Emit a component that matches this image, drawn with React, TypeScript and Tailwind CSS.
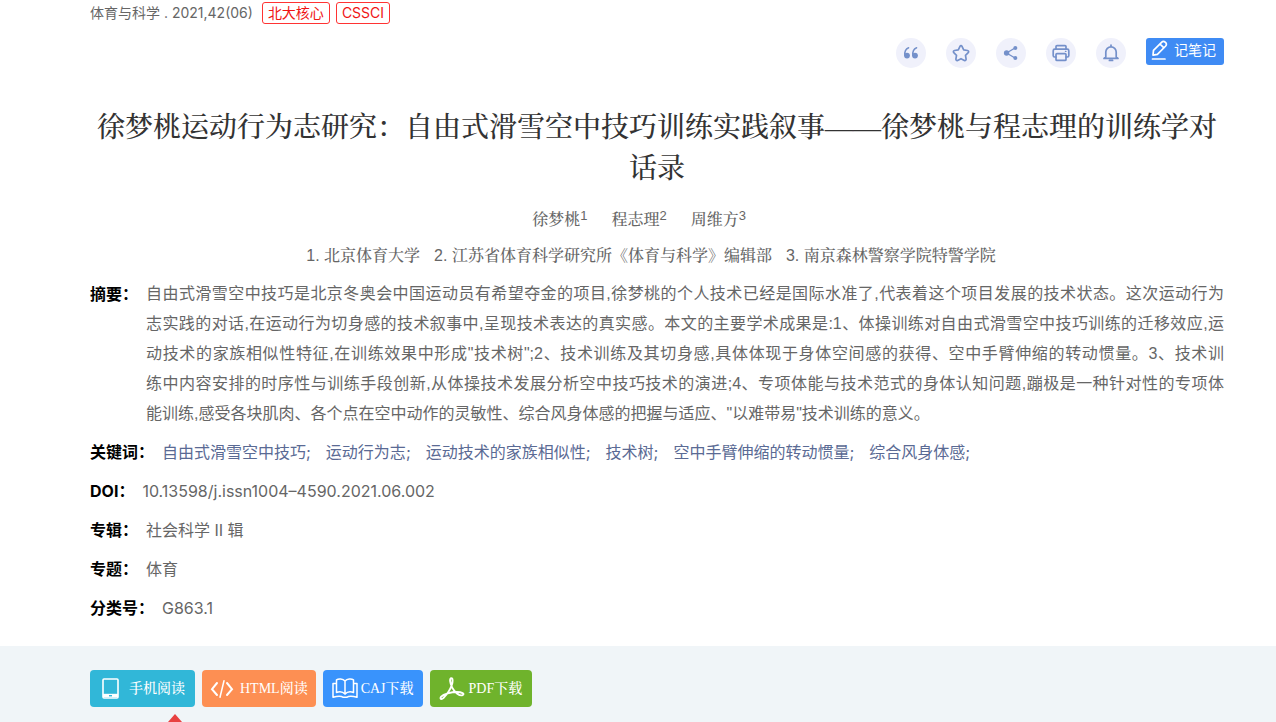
import type { ReactNode } from "react";

const abstractLines = [
  "自由式滑雪空中技巧是北京冬奥会中国运动员有希望夺金的项目,徐梦桃的个人技术已经是国际水准了,代表着这个项目发展的技术状态。这次运动行为",
  "志实践的对话,在运动行为切身感的技术叙事中,呈现技术表达的真实感。本文的主要学术成果是:1、体操训练对自由式滑雪空中技巧训练的迁移效应,运",
  "动技术的家族相似性特征,在训练效果中形成\"技术树\";2、技术训练及其切身感,具体体现于身体空间感的获得、空中手臂伸缩的转动惯量。3、技术训",
  "练中内容安排的时序性与训练手段创新,从体操技术发展分析空中技巧技术的演进;4、专项体能与技术范式的身体认知问题,蹦极是一种针对性的专项体",
  "能训练,感受各块肌肉、各个点在空中动作的灵敏性、综合风身体感的把握与适应、\"以难带易\"技术训练的意义。",
];

const keywords = [
  "自由式滑雪空中技巧",
  "运动行为志",
  "运动技术的家族相似性",
  "技术树",
  "空中手臂伸缩的转动惯量",
  "综合风身体感",
];

const authors = ["徐梦桃", "程志理", "周维方"];

const Badge = ({ children }: { children: ReactNode }) => (
  <a
    href="#"
    className="border border-[#f33] rounded-[3px] px-[5px] h-[22px] leading-5 text-sm text-[#f01414]"
  >
    {children}
  </a>
);

const RoundButton = ({ label, children }: { label: string; children: ReactNode }) => (
  <button
    aria-label={label}
    className="size-[30px] rounded-full bg-[#f0f1fb] text-[#7490ca] flex items-center justify-center"
  >
    <svg
      viewBox="0 0 18 18"
      className="size-[18px]"
      fill="none"
      stroke="currentColor"
      strokeWidth="1.7"
      strokeLinecap="round"
      strokeLinejoin="round"
    >
      {children}
    </svg>
  </button>
);

const Row = ({ label, children }: { label: string; children: ReactNode }) => (
  <div className="flex gap-2 leading-6">
    <dt className="font-bold text-black shrink-0">{label}</dt>
    <dd>{children}</dd>
  </div>
);

const App = () => {
  return (
    <div className="min-h-screen flex flex-col bg-white text-[#666] text-base font-['Inter','Noto_Sans_CJK_SC',sans-serif]">
      <main className="pl-[90px] pr-[52px] pb-[26px]">
        <div className="flex items-center gap-1.5 pt-[2px] text-sm leading-[22px]">
          <span className="mr-[3px]">
            <a href="#">体育与科学</a> . <a href="#">2021,42(06)</a>
          </span>
          <Badge>北大核心</Badge>
          <Badge>CSSCI</Badge>
        </div>

        {/* Toolbar */}
        <div className="flex justify-end gap-5 mt-[14px]">
          <RoundButton label="引用">
            <g fill="currentColor" stroke="none">
              <circle cx="5" cy="11.6" r="2.9" />
              <circle cx="13" cy="11.6" r="2.9" />
            </g>
            <path d="M2.9 11.4C2.4 7.600 3.800 5 6.600 3.800M10.900 11.400C10.400 7.600 11.800 5 14.600 3.800" strokeWidth="1.5" />
          </RoundButton>
          <RoundButton label="收藏">
            <path d="M9 1.700c.5 0 .8.300 1 .7l1.700 3.500 3.800.6c1.100.2 1.500 1.300.7 2.100l-2.700 2.700.6 3.900c.1 1-.8 1.600-1.700 1.200L9 14.700l-3.400 1.700c-.9.4-1.800-.2-1.700-1.200l.6-3.900L1.800 8.600c-.8-.8-.4-1.900.7-2.100l3.800-.6L8 2.400c.2-.4.5-.7 1-.7z" />
          </RoundButton>
          <RoundButton label="分享">
            <path d="M13 4L4.5 9l8.5 5" strokeWidth="1.4" />
            <g fill="currentColor" stroke="none">
              <circle cx="13.3" cy="3.9" r="2" />
              <circle cx="4.6" cy="9" r="2.7" />
              <circle cx="13.3" cy="14.1" r="2" />
            </g>
          </RoundButton>
          <RoundButton label="打印">
            <path d="M4 5V2.6C4 2 4.4 1.6 5 1.6h8c.6 0 1 .4 1 1V5M4 13H2.6c-.9 0-1.4-.5-1.4-1.4V6.8c0-1 .6-1.6 1.6-1.6h12.4c1 0 1.6.6 1.6 1.6v4.8c0 .9-.5 1.4-1.4 1.4H14" />
            <rect x="4" y="9.6" width="10" height="6.8" rx="1" />
            <path d="M13.400 7.400h.6" strokeWidth="1.2" />
          </RoundButton>
          <RoundButton label="提醒">
            <path d="M9 1v1.2M3.8 13V8a5.2 5.2 0 0110.4 0v5l1.8 1.4H2zM7.4 16.4h3.2" />
          </RoundButton>
          <button className="h-[27px] pl-1 pr-2 pb-[3px] rounded-[3px] bg-[#3f8bf4] text-white text-sm flex items-center gap-1">
            <svg
              viewBox="0 0 20 22"
              className="w-5 h-[22px]"
              fill="none"
              stroke="currentColor"
              strokeWidth="1.7"
              strokeLinejoin="round"
              strokeLinecap="round"
            >
              <path d="M3 16.2l.5-4.8 8.3-8.3a2.3 2.3 0 013.3 0l.6.6a2.3 2.3 0 010 3.3l-8.3 8.3zM10 5l3.9 3.9" />
              <path d="M2.5 20h12.5" />
            </svg>
            记笔记
          </button>
        </div>

        <h1 className="mt-[39px] text-[28px] leading-[41px] text-center text-[#333] font-medium font-['Liberation_Serif','Noto_Serif_CJK_SC','Noto_Sans_CJK_SC',serif]">
          徐梦桃运动行为志研究：自由式滑雪空中技巧训练实践叙事——徐梦桃与程志理的训练学对话录
        </h1>

        <div className="mt-[19px] pr-9 flex justify-center gap-6 leading-6 font-['Liberation_Sans','Noto_Serif_CJK_SC',serif] font-medium">
          {authors.map((name, i) => (
            <a href="#" key={name} className="flex">
              {name}
              <sup className="text-[13px] leading-4 top-0">{i + 1}</sup>
            </a>
          ))}
        </div>
        <div className="mt-3 pr-3 flex justify-center gap-[14px] leading-6 font-['Liberation_Sans','Noto_Serif_CJK_SC',serif] font-medium">
          <a href="#">1. 北京体育大学</a>
          <a href="#">2. 江苏省体育科学研究所《体育与科学》编辑部</a>
          <a href="#">3. 南京森林警察学院特警学院</a>
        </div>

        <dl className="mt-[11px] flex flex-col gap-[15px]">
          <div className="flex gap-2 leading-[30px] -mb-1">
            <dt className="font-bold text-black w-12 shrink-0">摘要：</dt>
            <dd className="grow min-w-0 font-['Liberation_Sans','Noto_Sans_CJK_SC',sans-serif]">
              {abstractLines.map((line, i) => (
                <span
                  key={i}
                  className={
                    i < abstractLines.length - 1
                      ? "block text-justify [text-align-last:justify]"
                      : "block"
                  }
                >
                  {line}
                </span>
              ))}
            </dd>
          </div>
          <div className="flex gap-2 leading-6">
            <dt className="font-bold text-black shrink-0">关键词：</dt>
            <dd className="flex flex-wrap gap-x-[15px] text-[#5a6a94]">
              {keywords.map((k) => (
                <a href="#" key={k}>
                  {k};
                </a>
              ))}
            </dd>
          </div>
          <Row label="DOI：">10.13598/j.issn1004–4590.2021.06.002</Row>
          <Row label="专辑：">社会科学 Ⅱ 辑</Row>
          <Row label="专题：">体育</Row>
          <Row label="分类号：">G863.1</Row>
        </dl>
      </main>

      {/* Download bar */}
      <footer className="grow bg-[#f0f5f8] pl-[90px] pr-[52px] pt-6 pb-[15px] flex items-start gap-[7px] text-sm text-white font-medium font-['Liberation_Serif','Noto_Serif_CJK_SC','Noto_Sans_CJK_SC',serif]">
        <div className="relative">
          <button className="h-[37px] pl-3 pr-[10px] rounded bg-[#31b7d8] flex items-center gap-[10px]">
            <svg viewBox="0 0 17 21" className="w-[17px] h-[21px]" fill="none" stroke="currentColor">
              <rect x="1" y="1" width="15" height="19" rx="1" strokeWidth="1.6" />
              <path d="M1 17.5h15" strokeWidth="3.4" />
              <path d="M7 17.7h3" stroke="#31b7d8" strokeWidth="1.4" />
            </svg>
            手机阅读
          </button>
          <svg viewBox="0 0 14 8" className="absolute left-[78px] top-[44px] w-[14px] h-2" fill="#e84141">
            <path d="M7 0l7 8H0z" />
          </svg>
        </div>
        <button className="h-[37px] px-2 rounded bg-[#fd8f53] flex items-center gap-[6px]">
          <svg
            viewBox="0 0 24 20"
            className="w-6 h-5"
            fill="none"
            stroke="currentColor"
            strokeWidth="2"
            strokeLinecap="round"
          >
            <path d="M7 4L2 10.2 7 16M17 4l5 6.2L17 16" />
            <path d="M14 1.8L10 18.2" strokeWidth="1.5" />
          </svg>
          HTML阅读
        </button>
        <button className="h-[37px] px-[9px] rounded bg-[#3993fc] flex items-center gap-[3px]">
          <svg
            viewBox="0 0 26 21"
            className="w-[26px] h-[21px]"
            fill="none"
            stroke="currentColor"
            strokeWidth="1.5"
            strokeLinejoin="round"
          >
            <path d="M13 3C10.8.6 6.5.6 4.500 1.800V14.500c2.800-1 6.300-.8 8.500 1.600 2.200-2.400 5.700-2.600 8.500-1.600V1.800C19.500.6 15.200.6 13 3zM13 3v13" />
            <path d="M4.500 5.500H1v13.800c4-1.200 8-1.600 10.300 0h3.400c2.300-1.600 6.300-1.200 10.300 0V5.500h-3.500" />
          </svg>
          CAJ下载
        </button>
        <button className="h-[37px] pl-[9px] pr-[10px] rounded bg-[#6fb32c] flex items-center gap-1">
          <svg
            viewBox="0 0 26 24"
            className="w-[26px] h-6"
            fill="none"
            stroke="currentColor"
            strokeWidth="1.9"
            strokeLinecap="round"
            strokeLinejoin="round"
          >
            <path d="M12.400 1.200c-2.200 0-1.400 5 .8 9.400 2.600 5 7.400 8.600 10.400 7.600 2.600-1.200-.8-3.200-5.600-3.200-6 0-13.400 2-15.800 4.600-1.800 2.200.2 3.400 2.400 1.200C8 17.400 11.400 12 12.800 8c1-3 1.200-6.800-.4-6.800z" />
          </svg>
          PDF下载
        </button>
      </footer>
    </div>
  );
};

export default App;
